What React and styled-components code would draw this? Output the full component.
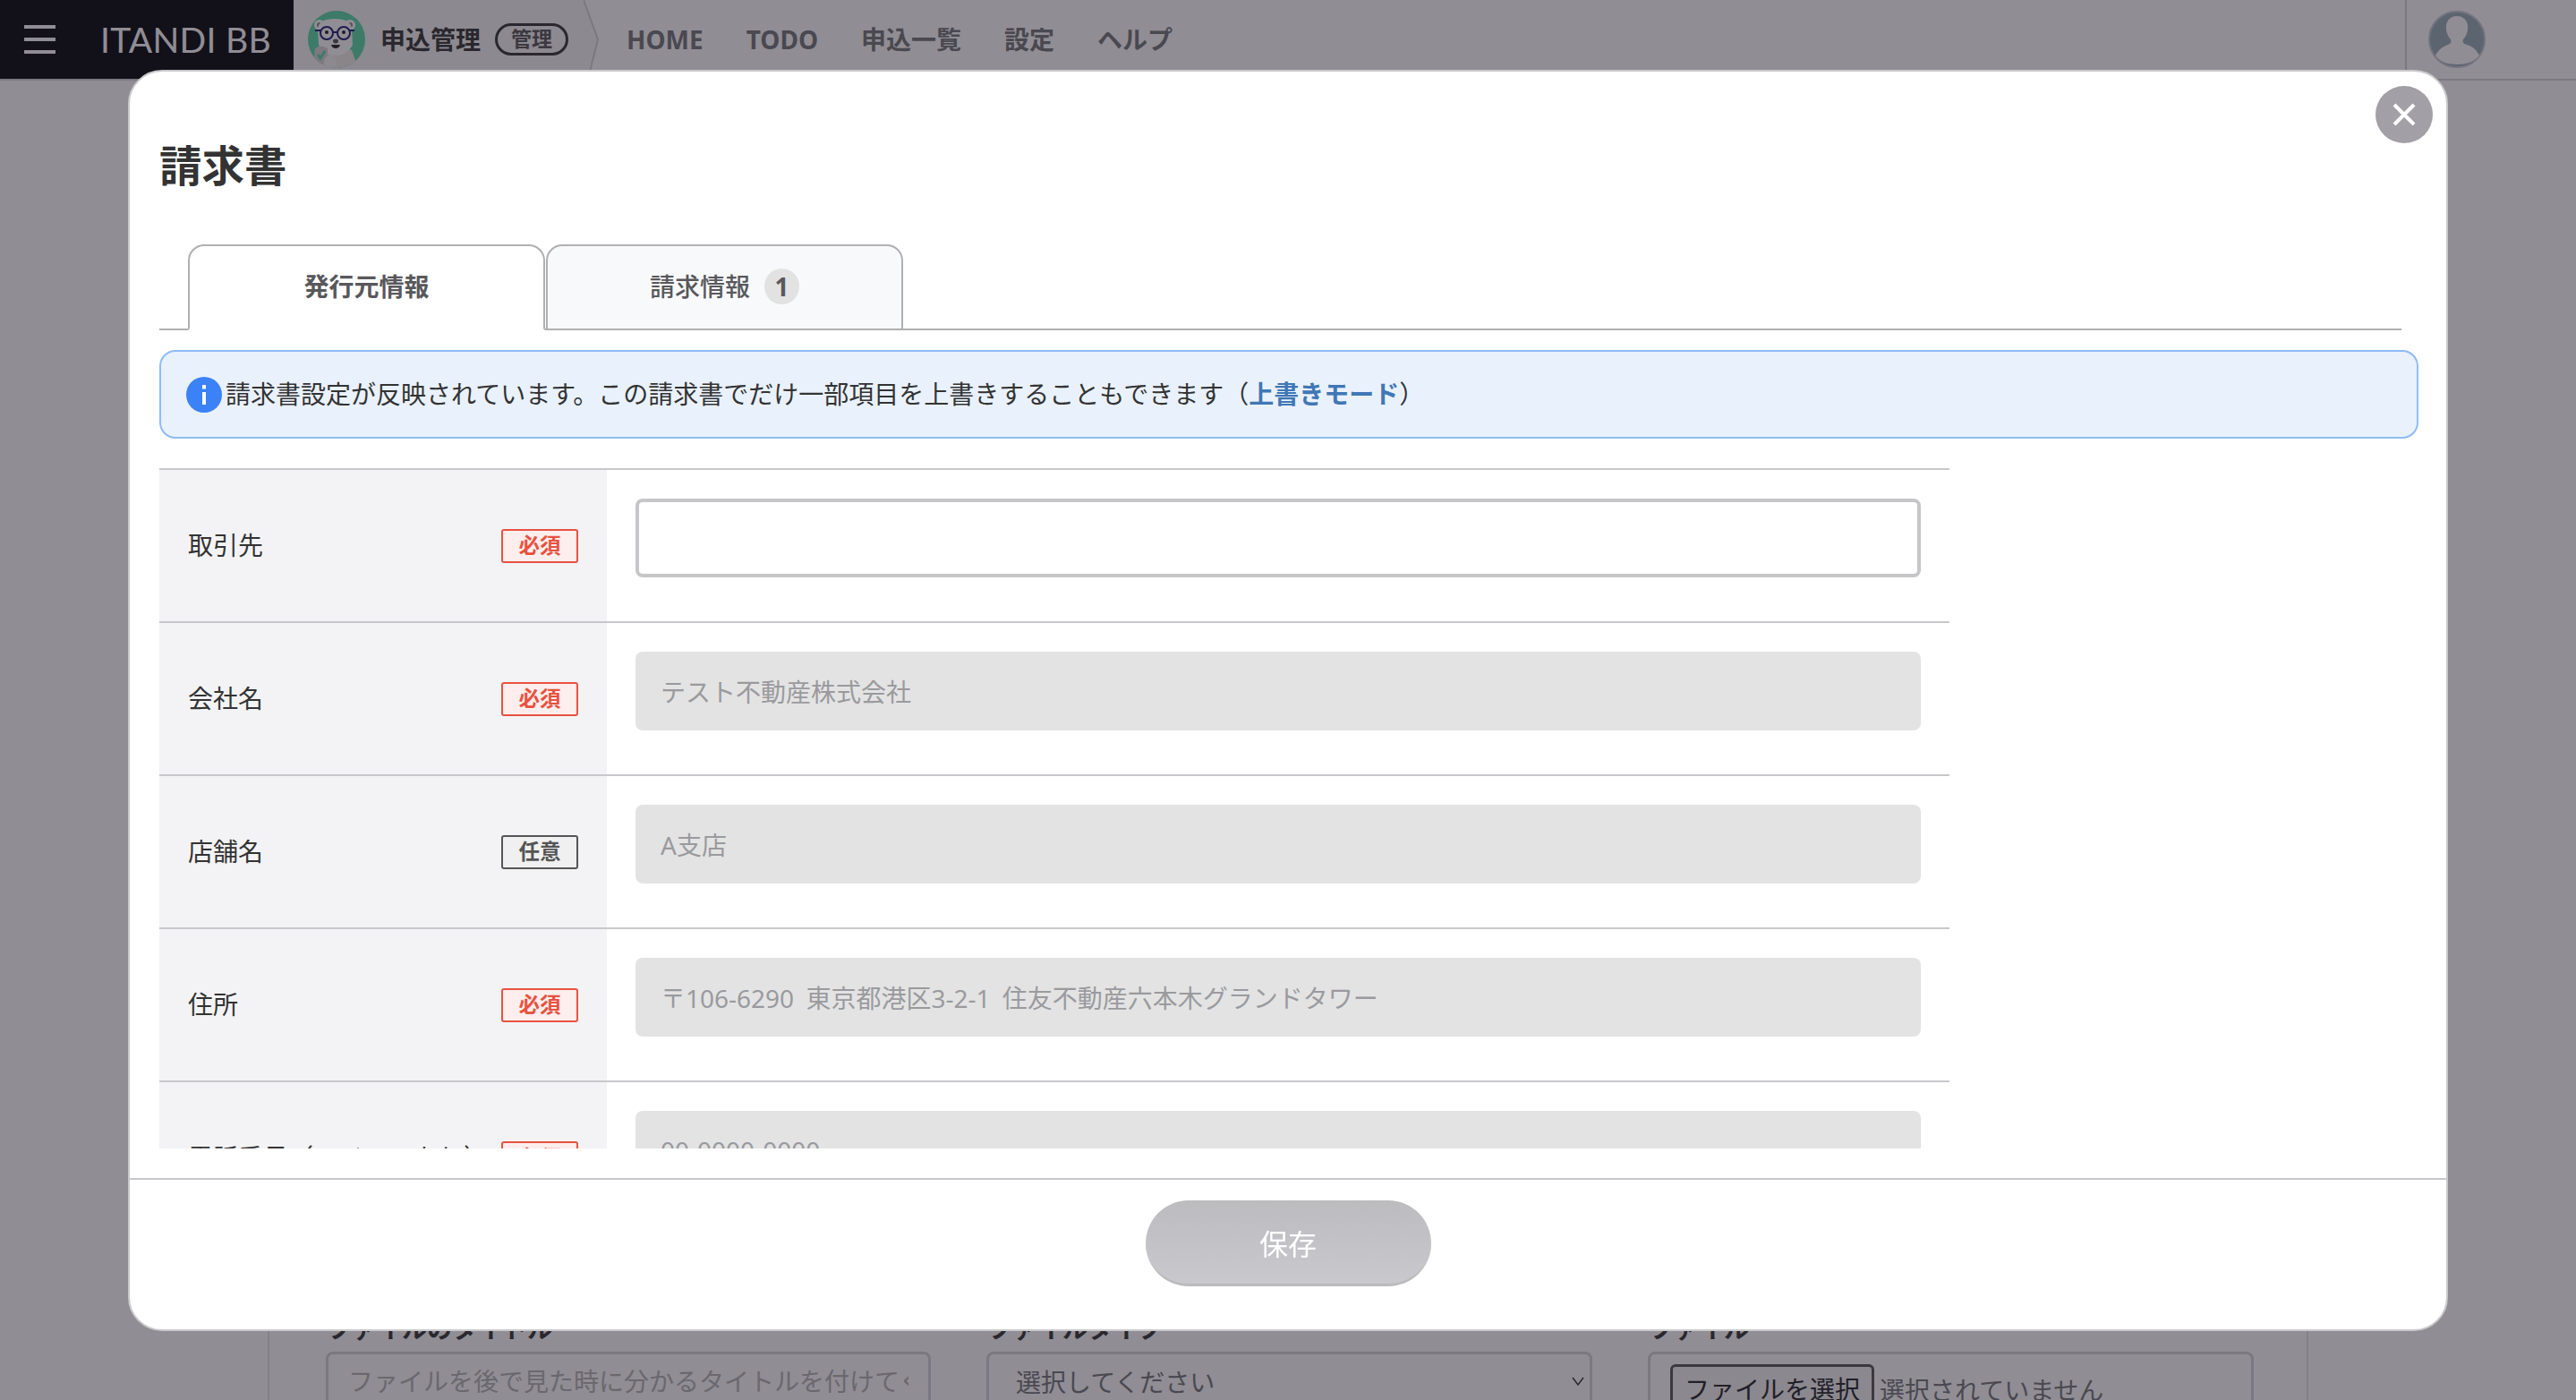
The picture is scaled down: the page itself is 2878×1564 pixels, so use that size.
import React from 'react';
import styled, { createGlobalStyle } from 'styled-components';

const GlobalStyle = createGlobalStyle`
  html, body {
    margin: 0;
    padding: 0;
    height: 100%;
    overflow: hidden;
    background: #fff;
    color: #333;
    font-family: "Noto Sans", "Noto Sans CJK JP", sans-serif;
    font-size: 28px;
  }
  * { box-sizing: border-box; }
`;

// Page underneath the dialog
const Page = styled.div`
  height: 1564px;
  overflow: hidden;
  display: flex;
  flex-direction: column;
`;

const TopBar = styled.header`
  height: 90px;
  flex-shrink: 0;
  display: flex;
  align-items: stretch;
  background: #fff;
  border-bottom: 2px solid #d3d5d6;
`;

const Brand = styled.div`
  width: 328px;
  display: flex;
  align-items: center;
  background: #030508;
  padding-left: 27px;
`;

const Hamburger = styled.div`
  width: 35px;
  display: flex;
  flex-direction: column;
  gap: 10px;
  margin-right: 50px;

  span {
    display: block;
    height: 4px;
    background: #fff;
  }
`;

const LogoText = styled.div`
  font-family: "Lato", sans-serif;
  font-size: 39px;
  line-height: 48px;
  letter-spacing: 0.3px;
  color: #fff;
  white-space: nowrap;
`;

const AppSection = styled.div`
  display: flex;
  align-items: center;
  width: 324px;
  padding-left: 16px;
  background: #f6f7f7;
`;

const AppTitle = styled.div`
  font-weight: 700;
  line-height: 40px;
  margin-left: 17px;
  color: #333;
  white-space: nowrap;
`;

const AdminPill = styled.div`
  margin-left: 16px;
  width: 82px;
  height: 36px;
  border: 3px solid #333;
  border-radius: 18px;
  font-size: 23px;
  font-weight: 700;
  line-height: 29px;
  text-align: center;
  color: #555;
  white-space: nowrap;
`;

const Nav = styled.nav`
  flex: 1;
  display: flex;
  align-items: center;
  gap: 48px;
  padding-left: 30px;
`;

const NavItem = styled.a`
  font-weight: 700;
  line-height: 40px;
  color: #737576;
  white-space: nowrap;
`;

const UserArea = styled.div`
  width: 191px;
  display: flex;
  align-items: center;
  padding-left: 24px;
  border-left: 2px solid #d3d5d6;
`;

const Content = styled.main`
  flex: 1;
  display: flex;
  justify-content: center;
`;

const Card = styled.section`
  width: 2280px;
  padding: 1374px 63px 0;
  border-left: 2px solid #e4e4e6;
  border-right: 2px solid #e4e4e6;
  display: grid;
  grid-template-columns: 676px 677px 677px;
  column-gap: 62px;
  align-content: start;
`;

const FieldLabel = styled.div`
  font-weight: 700;
  line-height: 40px;
  margin: 0 0 6px 1px;
  color: #333;
  white-space: nowrap;
`;

const FieldBox = styled.div`
  height: 66px;
  display: flex;
  align-items: ${({ $top }) => ($top ? 'flex-start' : 'center')};
  justify-content: ${({ $spread }) => ($spread ? 'space-between' : 'flex-start')};
  padding: ${({ $top }) => ($top ? '11px 0 0 22px' : '0 6px 0 30px')};
  border: 3px solid #d3d5d6;
  border-radius: 8px;
  color: #737576;
  white-space: nowrap;
`;

const TextField = styled.input`
  display: block;
  width: 100%;
  height: 66px;
  padding: 0 22px;
  border: 3px solid #d3d5d6;
  border-radius: 8px;
  background: #fff;
  font: inherit;

  &::placeholder {
    color: #b3b5b2;
    opacity: 1;
  }
`;

const FileButton = styled.div`
  height: 70px;
  padding: 0 13px;
  border: 3px solid #555;
  border-radius: 6px;
  background: #f4f4f4;
  line-height: 50px;
  color: #222;
`;

const FileName = styled.span`
  margin-left: 6px;
  line-height: 58px;
  color: #737576;
`;

// Dialog
const Overlay = styled.div`
  position: fixed;
  inset: 0;
  display: flex;
  align-items: center;
  justify-content: center;
  padding-top: 1px;
  background: rgba(33, 27, 42, 0.5);
`;

const Modal = styled.div`
  position: relative;
  width: 2592px;
  height: 1409px;
  display: flex;
  flex-direction: column;
  background: #fff;
  border: 2px solid #c9c9cb;
  border-radius: 38px;
  overflow: hidden;
`;

const CloseButton = styled.button`
  position: absolute;
  top: 16px;
  right: 15px;
  width: 64px;
  height: 64px;
  padding: 0;
  display: flex;
  align-items: center;
  justify-content: center;
  border: none;
  border-radius: 50%;
  background: #a2a0a6;
`;

const ModalTitle = styled.h1`
  margin: 77px 33px 60px;
  font-size: 47.5px;
  font-weight: 700;
  line-height: 56px;
  color: #333;
`;

const TabBar = styled.div`
  display: flex;
  gap: 1px;
  margin: 0 50px 0 33px;
  padding-left: 32px;
  border-bottom: 2px solid #b0b0b2;
`;

const Tab = styled.div`
  width: 399px;
  height: 96px;
  margin-bottom: -2px;
  padding-bottom: 3px;
  display: flex;
  align-items: center;
  justify-content: center;
  gap: 16px;
  border: 2px solid #b0b0b2;
  border-bottom: ${({ $active }) => ($active ? '2px solid #fff' : '2px solid #b0b0b2')};
  border-radius: 18px 18px 0 0;
  background: ${({ $active }) => ($active ? '#fff' : '#f8f9fb')};
  font-weight: ${({ $active }) => ($active ? 700 : 500)};
  line-height: 40px;
  color: #58585c;
`;

const CountBadge = styled.span`
  width: 39px;
  height: 40px;
  border-radius: 50%;
  background: #e2e2e2;
  font-size: 28px;
  font-weight: 700;
  line-height: 40px;
  text-align: center;
`;

const Notice = styled.div`
  height: 99px;
  margin: 22px 31px 0 33px;
  display: flex;
  align-items: center;
  gap: 4px;
  padding-left: 28px;
  border: 2px solid #8fbcf8;
  border-radius: 18px;
  background: #e9f1fd;
  color: #333;
  white-space: nowrap;
`;

const NoticeText = styled.span`
  padding-bottom: 3px;
`;

const NoticeLink = styled.a`
  font-weight: 700;
  color: #4077b5;
`;

const ModalBody = styled.div`
  flex: 1;
  min-height: 0;
  margin: 33px 31px 33px 33px;
  overflow: hidden;
`;

const FormTable = styled.div`
  width: 2000px;
`;

const FormRow = styled.div`
  display: grid;
  grid-template-columns: 500px 1fr;
  height: 171px;
  border-top: 2px solid #c8c8cc;
`;

const RowHead = styled.div`
  display: flex;
  align-items: center;
  justify-content: space-between;
  padding: 0 32px;
  background: #f3f3f5;
  color: #333;
`;

const RowLabel = styled.span`
  line-height: 40px;
  margin-bottom: 2px;
`;

const RowCell = styled.div`
  padding: 32px 32px 49px;
`;

const Badge = styled.span`
  width: 86px;
  height: 38px;
  flex-shrink: 0;
  border: 2px solid ${({ $required }) => ($required ? '#e85240' : '#555')};
  border-radius: 3px;
  background: ${({ $required }) => ($required ? '#fceeed' : '#f0f0f0')};
  font-size: 23.5px;
  font-weight: 700;
  line-height: 32px;
  text-align: center;
  color: ${({ $required }) => ($required ? '#e85240' : '#555')};
`;

const FormInput = styled.input`
  display: block;
  width: 100%;
  height: 88px;
  padding: 0 28px;
  border: ${({ disabled }) => (disabled ? 'none' : '4px solid #c6c6c8')};
  border-radius: 8px;
  background: ${({ disabled }) => (disabled ? '#e3e3e3' : '#fff')};
  font: inherit;
  word-spacing: 6px;
  color: #9a9a9e;
  -webkit-text-fill-color: #9a9a9e;
  opacity: 1;
`;

const ModalFooter = styled.div`
  height: 169px;
  flex-shrink: 0;
  display: flex;
  justify-content: center;
  padding-top: 23px;
  border-top: 2px solid #c8c8cc;
`;

const SaveButton = styled.button`
  width: 319px;
  height: 96px;
  border: none;
  border-bottom: 3px solid #bbbbbd;
  border-radius: 48px;
  background: linear-gradient(#bcbcbf, #c9c8cd);
  font: inherit;
  font-size: 32px;
  color: #fff;
`;

const BearIcon = () => (
  <svg width="64" height="64" viewBox="0 0 64 64" style={{ flexShrink: 0 }}>
    <defs>
      <clipPath id="bear-clip">
        <circle cx="32" cy="32" r="32" />
      </clipPath>
    </defs>
    <g clipPath="url(#bear-clip)">
      <rect width="64" height="64" fill="#5bd9a6" />
      <path d="M15 64 L17 44 Q32 36 49 44 L56 64 Z" fill="#f0efe8" />
      <circle cx="13" cy="16" r="6" fill="#fff" />
      <circle cx="13" cy="16" r="3" fill="#8c8580" />
      <circle cx="47" cy="16" r="6" fill="#fff" />
      <circle cx="47" cy="16" r="3" fill="#8c8580" />
      <path d="M11 20 Q12 9 30 9 Q48 9 49 20 L50 38 Q44 50 30 50 Q16 50 12 38 Z" fill="#fff" />
      <circle cx="21" cy="25" r="7" fill="#fff" stroke="#1c1a70" strokeWidth="2" />
      <circle cx="40" cy="25" r="7" fill="#fff" stroke="#1c1a70" strokeWidth="2" />
      <path d="M28 24 H33 M8 22 H14 M47 22 H52" stroke="#1c1a70" strokeWidth="2" />
      <circle cx="21" cy="24" r="2" fill="#1c1a20" />
      <circle cx="40" cy="24" r="2" fill="#1c1a20" />
      <ellipse cx="31" cy="34" rx="3" ry="2.4" fill="#555" />
      <path d="M26 38 H36 Q35 42 31 42 Q27 42 26 38 Z" fill="#222" />
      <path d="M8 42 Q15 37 22 42 V52 Q21 58 15 61 Q9 58 7 52 Z" fill="#d6d6d9" />
      <path d="M11 49 L14 53 L19 45" fill="none" stroke="#5bd9a6" strokeWidth="3" />
      <ellipse cx="25" cy="57" rx="7" ry="7" fill="#f7f7f5" />
    </g>
  </svg>
);

const UserIcon = () => (
  <svg width="64" height="64" viewBox="0 0 64 64">
    <circle cx="32" cy="32" r="31" fill="#97adb6" stroke="#c4cad0" strokeWidth="2" />
    <path d="M32 6 C41 6 45 13 44 21 C43 27 41 30 39 32 C38 35 39 37 43 38 C50 40 54 44 57 50 C51 57 43 60 32 60 C21 60 13 57 8 50 C11 44 16 40 22 38 C25 37 26 35 25 32 C23 30 21 27 20 21 C19 13 23 6 32 6 Z" fill="#fff" />
  </svg>
);

const InfoIcon = () => (
  <svg width="40" height="40" viewBox="0 0 40 40" style={{ flexShrink: 0 }}>
    <circle cx="20" cy="20" r="20" fill="#3b82f6" />
    <rect x="18" y="9" width="4" height="4.5" fill="#fff" />
    <rect x="18" y="17" width="4" height="14" fill="#fff" />
  </svg>
);

const CloseIcon = () => (
  <svg width="28" height="28" viewBox="0 0 28 28">
    <path d="M3 3 L25 25 M25 3 L3 25" stroke="#fff" strokeWidth="4" fill="none" />
  </svg>
);

const SelectArrow = () => (
  <svg width="14" height="10" viewBox="0 0 14 10">
    <path d="M1 1 L7 9 L13 1" stroke="#333" strokeWidth="1.5" fill="none" />
  </svg>
);

const rows = [
  { label: '取引先', required: true, value: '', editable: true },
  { label: '会社名', required: true, value: 'テスト不動産株式会社' },
  { label: '店舗名', required: false, value: 'A支店' },
  { label: '住所', required: true, value: '〒106-6290 東京都港区3-2-1 住友不動産六本木グランドタワー' },
  { label: '電話番号（ハイフンあり）', required: true, value: '00-0000-0000' },
];

const navItems = ['HOME', 'TODO', '申込一覧', '設定', 'ヘルプ'];

const App = () => (
  <>
    <GlobalStyle />
    <Page>
      <TopBar>
        <Brand>
          <Hamburger>
            <span />
            <span />
            <span />
          </Hamburger>
          <LogoText>ITANDI BB</LogoText>
        </Brand>
        <AppSection>
          <BearIcon />
          <AppTitle>申込管理</AppTitle>
          <AdminPill>管理</AdminPill>
        </AppSection>
        <svg width="18" height="88" viewBox="0 0 18 88" style={{ flexShrink: 0 }}>
          <path d="M0 0 L16 44 L5 88 L0 88 Z" fill="#f6f7f7" />
          <path d="M0 0 L16 44 L5 88" fill="none" stroke="#d3d5d6" strokeWidth="2" />
        </svg>
        <Nav>
          {navItems.map((item) => (
            <NavItem key={item}>{item}</NavItem>
          ))}
        </Nav>
        <UserArea>
          <UserIcon />
        </UserArea>
      </TopBar>
      <Content>
        <Card>
          <div>
            <FieldLabel>ファイルのタイトル</FieldLabel>
            <TextField readOnly placeholder="ファイルを後で見た時に分かるタイトルを付けてください" />
          </div>
          <div>
            <FieldLabel>ファイルタイプ</FieldLabel>
            <FieldBox $spread>
              選択してください
              <SelectArrow />
            </FieldBox>
          </div>
          <div>
            <FieldLabel>ファイル</FieldLabel>
            <FieldBox $top>
              <FileButton>ファイルを選択</FileButton>
              <FileName>選択されていません</FileName>
            </FieldBox>
          </div>
        </Card>
      </Content>
    </Page>

    <Overlay>
      <Modal>
        <CloseButton aria-label="閉じる">
          <CloseIcon />
        </CloseButton>
        <ModalTitle>請求書</ModalTitle>
        <TabBar>
          <Tab $active>発行元情報</Tab>
          <Tab>
            請求情報
            <CountBadge>1</CountBadge>
          </Tab>
        </TabBar>
        <Notice>
          <InfoIcon />
          <NoticeText>
            請求書設定が反映されています。この請求書でだけ一部項目を上書きすることもできます（
            <NoticeLink>上書きモード</NoticeLink>）
          </NoticeText>
        </Notice>
        <ModalBody>
          <FormTable>
            {rows.map((row) => (
              <FormRow key={row.label}>
                <RowHead>
                  <RowLabel>{row.label}</RowLabel>
                  <Badge $required={row.required}>{row.required ? '必須' : '任意'}</Badge>
                </RowHead>
                <RowCell>
                  <FormInput disabled={!row.editable} defaultValue={row.value} />
                </RowCell>
              </FormRow>
            ))}
          </FormTable>
        </ModalBody>
        <ModalFooter>
          <SaveButton>保存</SaveButton>
        </ModalFooter>
      </Modal>
    </Overlay>
  </>
);

export default App;
